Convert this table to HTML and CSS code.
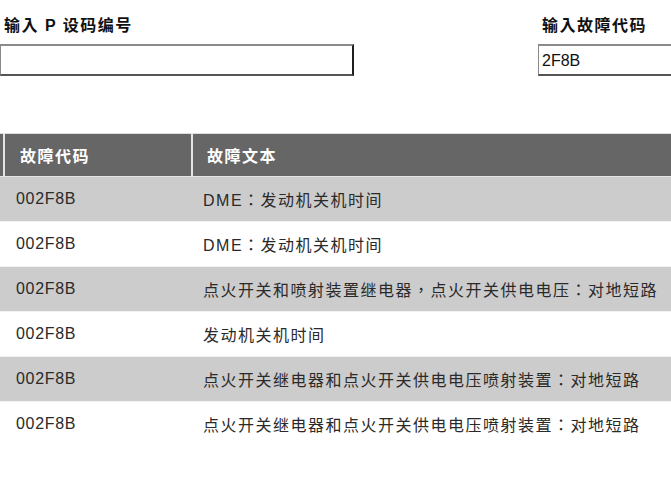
FILE: index.html
```html
<!DOCTYPE html>
<html lang="zh-Hant">
<head>
<meta charset="utf-8">
<title>故障代码</title>
<link rel="stylesheet" href="styles.css">
</head>
<body>
<div class="page">
  <form class="search">
    <div class="field field-p">
      <label class="label" for="pcode">输入 P 设码编号</label>
      <input class="input" id="pcode" type="text" value="">
    </div>
    <div class="field field-code">
      <label class="label" for="fcode">输入故障代码</label>
      <input class="input input-open" id="fcode" type="text" value="2F8B">
    </div>
  </form>

  <table class="faults">
    <thead>
      <tr>
        <th class="c-edge"></th>
        <th class="c-code">故障代码</th>
        <th class="c-text">故障文本</th>
      </tr>
    </thead>
    <tbody>
      <tr class="odd"><td class="c-edge"></td><td class="c-code">002F8B</td><td class="c-text">DME：发动机关机时间</td></tr>
      <tr><td class="c-edge"></td><td class="c-code">002F8B</td><td class="c-text">DME：发动机关机时间</td></tr>
      <tr class="odd"><td class="c-edge"></td><td class="c-code">002F8B</td><td class="c-text">点火开关和喷射装置继电器，点火开关供电电压：对地短路</td></tr>
      <tr><td class="c-edge"></td><td class="c-code">002F8B</td><td class="c-text">发动机关机时间</td></tr>
      <tr class="odd"><td class="c-edge"></td><td class="c-code">002F8B</td><td class="c-text">点火开关继电器和点火开关供电电压喷射装置：对地短路</td></tr>
      <tr><td class="c-edge"></td><td class="c-code">002F8B</td><td class="c-text">点火开关继电器和点火开关供电电压喷射装置：对地短路</td></tr>
    </tbody>
  </table>
</div>
</body>
</html>
```

FILE: styles.css
```css
html, body {
  margin: 0;
  padding: 0;
  background: #ffffff;
  overflow: hidden;
}

body {
  width: 671px;
  height: 500px;
  font-family: "Liberation Sans", Arial, "Noto Sans CJK TC", sans-serif;
  color: #222222;
}

.page {
  display: flex;
  flex-direction: column;
}

.search {
  display: flex;
  padding-top: 16px;
  margin: 0;
}

.field {
  display: flex;
  flex-direction: column;
  min-width: 0;
}

.field-p {
  width: 354px;
  flex-shrink: 0;
}

.field-code {
  margin-left: 184px;
  flex: 1;
}

.label {
  padding-left: 4px;
  font-size: 16px;
  font-weight: bold;
  letter-spacing: 1.5px;
  line-height: 20px;
  height: 28px;
  color: #111111;
  white-space: nowrap;
}

.input {
  box-sizing: border-box;
  height: 32px;
  width: 100%;
  margin: 0;
  padding: 2px 3px 0;
  border-style: solid;
  border-width: 2px 2px 2px 1px;
  border-color: #8a8a8a #1e1e1e #555555 #8a8a8a;
  background: #ffffff;
  font-family: "Liberation Sans", Arial, "Noto Sans CJK TC", sans-serif;
  font-size: 16px;
  color: #111111;
  outline: none;
}

.input-open {
  border-right-width: 0;
}

.faults {
  margin-top: 57px;
  width: 671px;
  border-collapse: collapse;
  border-top: 1px solid #dddddd;
  font-size: 16px;
}

.faults th {
  height: 42px;
  padding: 0;
  background: #666666;
  color: #ffffff;
  font-weight: bold;
  letter-spacing: 1.5px;
  text-align: left;
  border-right: 2px solid #e4e4e4;
  border-bottom: 1px solid #e4e4e4;
}

.faults th:last-child {
  border-right: none;
}

.faults td {
  height: 44px;
  padding: 0;
  color: #2a2a2a;
  border-top: 1px solid #f2f2f2;
}

.faults tr.odd td {
  background: #cccccc;
}

.c-edge {
  width: 3px;
}

.faults th.c-code {
  width: 171px;
  padding-left: 15px;
}

.faults td.c-code {
  padding-left: 12px;
  letter-spacing: 0.7px;
}

.faults th.c-text {
  padding-left: 14px;
}

.faults td.c-text {
  padding-left: 11px;
  letter-spacing: 1.5px;
}
```
